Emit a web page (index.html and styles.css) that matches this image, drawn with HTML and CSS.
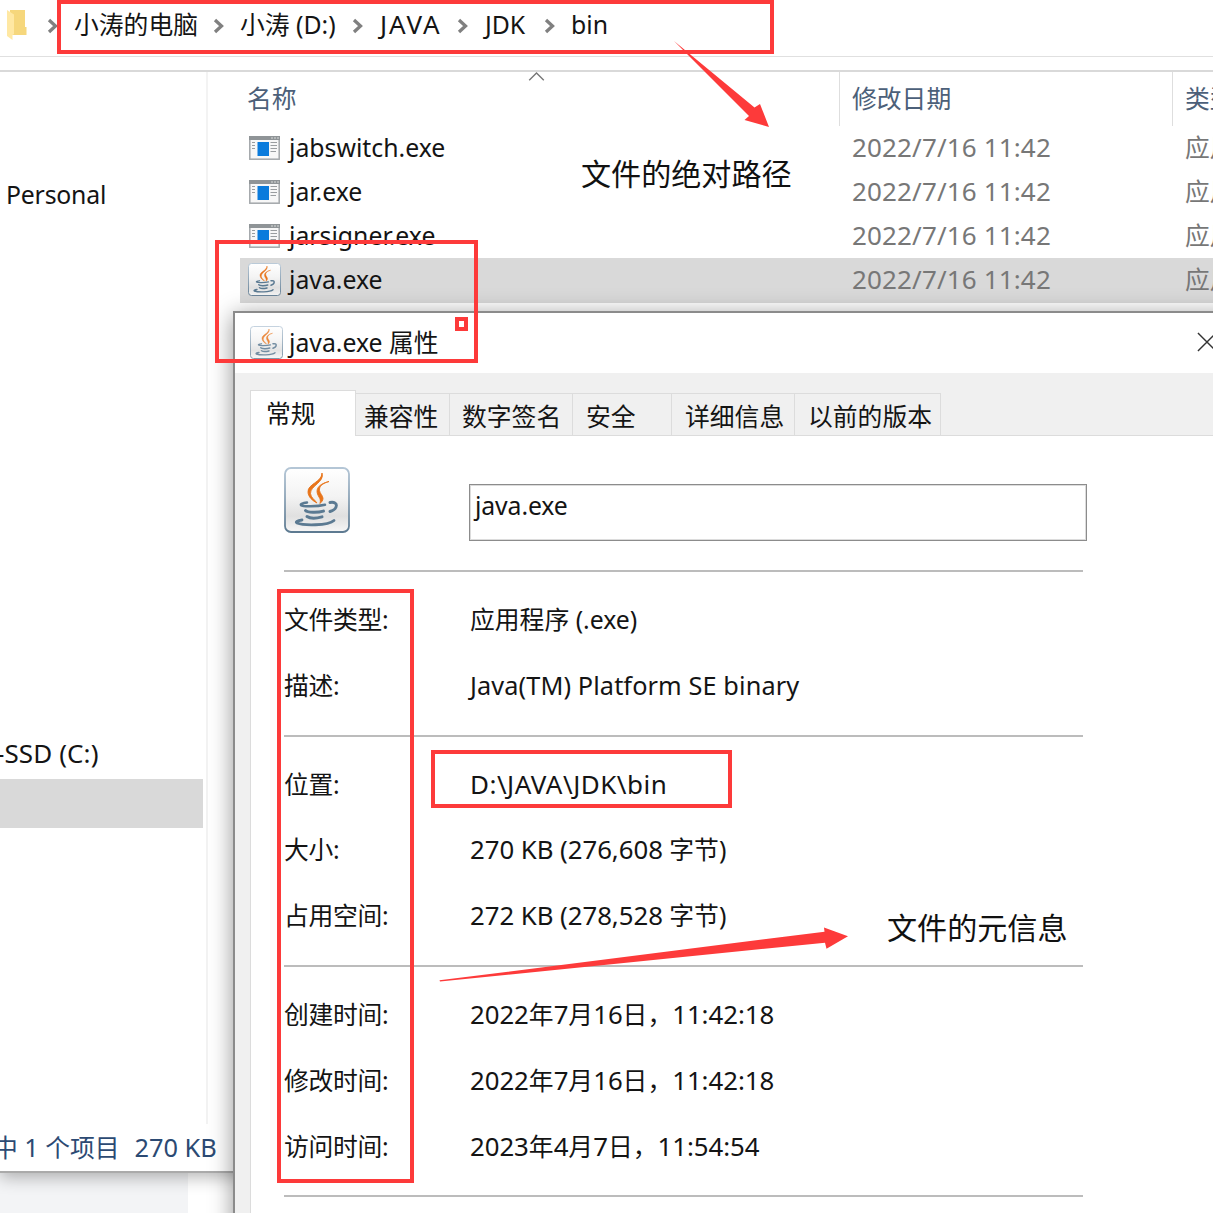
FILE: index.html
```html
<!DOCTYPE html>
<html lang="zh-CN">
<head>
<meta charset="utf-8">
<title>java.exe 属性</title>
<link rel="stylesheet" href="styles.css">
</head>
<body>
<svg class="defs" width="0" height="0" aria-hidden="true">
  <defs>
    <linearGradient id="tile" x1="0" y1="0" x2="0" y2="1">
      <stop offset="0" stop-color="#ffffff"/>
      <stop offset=".45" stop-color="#f3f3f3"/>
      <stop offset=".75" stop-color="#e0e0e0"/>
      <stop offset="1" stop-color="#f6f6f6"/>
    </linearGradient>
    <linearGradient id="rim" x1="0" y1="0" x2="0" y2="1">
      <stop offset="0" stop-color="#b4c6d6"/>
      <stop offset="1" stop-color="#5d7a91"/>
    </linearGradient>
    <symbol id="java" viewBox="0 0 66 66">
      <rect x="1" y="1" width="64" height="64" rx="6" fill="url(#tile)" stroke="url(#rim)" stroke-width="1.8"/>
      <g fill="#e8741a" stroke="#e8741a" stroke-width=".9">
        <path d="M38 6c3 9-12 13-11.500 20.500 .3 4 4 6 6.500 9.500-4-2-9-6-9-11C23.500 17 38 15 38 6z"/>
        <path d="M45 14.500c-7 2-10 5-9.500 9 .3 3 3.500 5 3.500 8 0 2-1.500 3.500-3 5 .7-3 .3-4.500-1-6.500-5-8 0-13 10-15.500z"/>
      </g>
      <g fill="none" stroke="#5b7a92" stroke-linecap="round">
        <path stroke-width="2.500" d="M23 35.500c-4 .7-7 1.500-6 2.700 2 1.600 16 1.500 24-.5"/>
        <path stroke-width="2.900" d="M46 35.500c9-1.500 8 6.500 0 9"/>
        <path stroke-width="3" d="M21.500 43.500c2 2.200 12 2.400 18 .6"/>
        <path stroke-width="3" d="M23 49.500c3 2 9 2 15 .4"/>
        <path stroke-width="2.800" d="M18 53c-5 .7-7 2-5 3 6 2.500 31 3 37-2.500"/>
      </g>
    </symbol>
    <symbol id="exe" viewBox="0 0 31 24">
      <rect x=".8" y=".8" width="29.400" height="22.400" fill="#f7f7f7" stroke="#a3a7aa" stroke-width="1.500"/>
      <path fill="#8f9497" d="M0 0h31v4H0z"/>
      <path stroke="#d7d9da" stroke-width="1.200" d="M22 2h2m1 0h2m1 0h2"/>
      <path fill="#0a7bdc" d="M8.500 6h11.500v14H8.500z"/>
      <path stroke="#999da0" stroke-width="1.200" d="M3 6.500h3M3 9.500h3M3 12.500h3M21.500 6.500H28M21.500 9.500H28M21.500 12.500H28M21.500 15.500H27"/>
    </symbol>
    <symbol id="chev" viewBox="0 0 12 16">
      <path fill="none" stroke="#808080" stroke-width="3.300" d="M2 2l6.500 6L2 14"/>
    </symbol>
  </defs>
</svg>

<main class="desktop">
  <section class="explorer">
    <header class="address">
      <svg class="folder" viewBox="0 0 20 30"><path fill="#f6d77c" d="M3 0h15v17h1.500v8H3z"/><path fill="#ffe8a3" d="M0 0l7 4.500V24l-1.500 1v5L0 26z"/></svg>
      <nav class="crumbs">
        <svg class="chev"><use href="#chev"/></svg><span>小涛的电脑</span>
        <svg class="chev"><use href="#chev"/></svg><span>小涛 (D:)</span>
        <svg class="chev"><use href="#chev"/></svg><span class="java-crumb">JAVA</span>
        <svg class="chev"><use href="#chev"/></svg><span class="jdk-crumb">JDK</span>
        <svg class="chev"><use href="#chev"/></svg><span>bin</span>
      </nav>
    </header>
    <div class="body">
      <aside class="sidebar">
        <div class="side-item">Personal</div>
        <div class="side-item drive">-SSD (C:)</div>
        <div class="side-item selected"></div>
      </aside>
      <div class="files">
        <div class="row head"><span class="name">名称<svg class="sort" viewBox="0 0 16 9"><path fill="none" stroke="#777" stroke-width="1.400" d="M.7 8.300L8 1l7.300 7.300"/></svg></span><span class="date">修改日期</span><span class="type">类型</span></div>
        <div class="row"><span class="name"><svg class="ico"><use href="#exe"/></svg>jabswitch.exe</span><span class="date">2022/7/16 11:42</span><span class="type">应用</span></div>
        <div class="row"><span class="name"><svg class="ico"><use href="#exe"/></svg>jar.exe</span><span class="date">2022/7/16 11:42</span><span class="type">应用</span></div>
        <div class="row"><span class="name"><svg class="ico"><use href="#exe"/></svg>jarsigner.exe</span><span class="date">2022/7/16 11:42</span><span class="type">应用</span></div>
        <div class="row active"><span class="name"><svg class="jico"><use href="#java"/></svg>java.exe</span><span class="date">2022/7/16 11:42</span><span class="type">应用</span></div>
      </div>
    </div>
    <footer class="status"><span>中 <b class="num">1</b> 个项目</span><span class="num">270 KB</span></footer>
  </section>
  <div class="below"></div>

  <section class="dialog">
    <header class="title"><svg class="jico"><use href="#java"/></svg><span>java.exe 属性</span>
      <svg class="close" viewBox="0 0 21 21"><path stroke="#333" stroke-width="1.500" d="M1 1l19 19M20 1L1 20"/></svg></header>
    <div class="tabs">
      <span class="tab current">常规</span><span class="tab t2">兼容性</span><span class="tab t3">数字签名</span><span class="tab t4">安全</span><span class="tab t5">详细信息</span><span class="tab t6">以前的版本</span><span class="rest"></span>
    </div>
    <div class="page">
      <div class="top"><svg class="big"><use href="#java"/></svg><div class="field">java.exe</div></div>
      <dl class="group">
        <dt>文件类型:</dt><dd>应用程序 (.exe)</dd>
        <dt>描述:</dt><dd class="desc">Java(TM) Platform SE binary</dd>
      </dl>
      <dl class="group">
        <dt>位置:</dt><dd class="path">D:\JAVA\JDK\bin</dd>
        <dt>大小:</dt><dd><b class="num">270 KB (276,608</b> 字节)</dd>
        <dt>占用空间:</dt><dd><b class="num">272 KB (278,528</b> 字节)</dd>
      </dl>
      <dl class="group">
        <dt>创建时间:</dt><dd><b class="num">2022</b>年<b class="num">7</b>月<b class="num">16</b>日，<b class="num">11:42:18</b></dd>
        <dt>修改时间:</dt><dd><b class="num">2022</b>年<b class="num">7</b>月<b class="num">16</b>日，<b class="num">11:42:18</b></dd>
        <dt>访问时间:</dt><dd><b class="num">2023</b>年<b class="num">4</b>月<b class="num">7</b>日，<b class="num">11:54:54</b></dd>
      </dl>
      <div class="group"></div>
    </div>
  </section>

  <div class="mark m-crumbs"></div>
  <div class="mark m-file"></div>
  <div class="mark m-dot"></div>
  <div class="mark m-labels"></div>
  <div class="mark m-path"></div>
  <svg class="arrows" viewBox="0 0 1213 1213"><path fill="#fd3a3a" d="M674 41L754.500 107.500 760 104 769 127 744.500 120 749 116zM439.500 980.300L824.500 931.700 824 927.500 848 936.300 826.500 948.700 825 942.700 440 981.500z"/></svg>
  <div class="note n-path">文件的绝对路径</div>
  <div class="note n-meta">文件的元信息</div>
</main>
</body>
</html>
```
FILE: styles.css
```css
* { box-sizing: border-box; }
body {
  margin: 0;
  width: 1213px;
  height: 1213px;
  overflow: hidden;
  background: #fff;
  color: #141414;
  font: 24.8px/44px "Noto Sans", "Noto Sans CJK SC", sans-serif;
  white-space: nowrap;
}
.defs { position: absolute; }
.desktop { position: relative; width: 1213px; height: 1213px; overflow: hidden; }
.num { font-weight: 400; font-size: 25.8px; letter-spacing: -.05px; }

.explorer {
  position: relative;
  display: flex;
  flex-direction: column;
  height: 1173px;
  background: #fff;
  border-bottom: 2px solid #aaa;
  box-shadow: 0 4px 16px rgba(0, 0, 0, .3);
}
.address { display: flex; height: 57px; border-bottom: 1px solid #e0e0e0; padding-left: 7px; }
.folder { width: 20px; height: 30px; margin-top: 10px; }
.crumbs {
  display: grid;
  grid-template-columns: 27px 139px 27px 112px 28px 77px 28px 59px 27px 60px;
  align-items: center;
  height: 48px;
  padding-left: 20px;
}
.chev { width: 12px; height: 16px; margin-top: 4px; }
.java-crumb { font-size: 26px; letter-spacing: 1.9px; }

.body { display: flex; height: 1054px; margin-top: 13px; border-top: 2px solid #d9d9d9; }
.sidebar { flex: none; width: 208px; border-right: 2px solid #f3f3f3; padding-top: 100px; }
.side-item { height: 44px; padding-left: 6px; letter-spacing: -.2px; }
.drive { margin-top: 515px; padding-left: 0; margin-left: -4px; font-size: 26px; letter-spacing: .1px; }
.selected { height: 49px; width: 203px; margin-top: 4px; background: #d9d9d9; }
.files { flex: none; width: 1005px; padding-left: 32px; overflow: hidden; }
.row { display: flex; height: 44px; line-height: 42px; }
.row span { flex: none; }
.name { display: flex; align-items: center; height: 42px; width: 599px; padding-left: 9px; }
.date { width: 333px; padding-left: 13px; color: #777; font-size: 26px; letter-spacing: .15px; }
.type { width: 80px; padding-left: 13px; color: #777; }
.head { position: relative; height: 54px; line-height: 52px; }
.head span { color: #4c6079; }
.head .name { height: 52px; padding-left: 7px; }
.head .date { font-size: 24.8px; letter-spacing: 0; }
.head .date, .head .type { border-left: 1px solid #dedede; padding-left: 12px; }
.sort { position: absolute; left: 288px; top: 0; width: 17px; height: 9px; }
.ico { width: 31px; height: 24px; margin-right: 9px; margin-top: 2px; }
.jico { width: 33px; height: 33px; flex: none; margin-right: 8px; margin-left: -1px; }
.active { width: 1005px; height: 45px; background: #d9d9d9; }
.status { display: flex; gap: 15px; height: 46px; line-height: 46px; margin-left: -7px; color: #2c4a73; }
.status .num { font-size: 25.4px; }
.below { width: 188px; height: 40px; background: #f3f4f6; }

.dialog {
  position: absolute;
  left: 233px;
  top: 311px;
  width: 1100px;
  height: 1000px;
  border: 2px solid #8b8b8b;
  background: #f0f0f0;
  box-shadow: 0 4px 22px rgba(0, 0, 0, .42);
}
.title { display: flex; align-items: center; height: 60px; line-height: 42px; background: #fff; padding: 0 0 3px 15px; }
.title .jico { margin: 2px 6px 0 0; opacity: .85; }
.close { width: 20px; height: 20px; margin-left: 758px; }
.tabs { display: flex; align-items: flex-end; height: 63px; padding-left: 15px; }
.tab { height: 43px; line-height: 44px; border: solid #dcdcdc; border-width: 1px 1px 1px 0; padding-left: 9px; }
.current { width: 106px; height: 46px; border-width: 1px 1px 0; background: #fff; padding-left: 15px; }
.t2 { width: 94px; padding-left: 8px; }
.t3 { width: 123px; padding-left: 12px; }
.t4 { width: 99px; padding-left: 13px; }
.t5 { width: 123px; padding-left: 13px; }
.t6 { width: 146px; padding-left: 13px; }
.rest { flex: 1; border-bottom: 1px solid #dcdcdc; }
.page { margin-left: 15px; height: 800px; padding-left: 33px; background: #fff; border-left: 1px solid #dcdcdc; }
.top { display: flex; height: 134px; padding-top: 31px; }
.big { width: 66px; height: 66px; margin-right: 119px; }
.field { width: 618px; height: 57px; margin-top: 17px; border: 1px solid #8c8c8c; box-shadow: inset 0 0 0 1px #dcdcdc; padding-left: 5px; line-height: 41px; letter-spacing: -.1px; }
.group {
  display: grid;
  grid-template-columns: 186px 613px;
  grid-auto-rows: 65.8px;
  width: 799px;
  margin: 0;
  padding: 15px 0 16px;
  border-top: 2px solid #bcbcbc;
  line-height: 64px;
}
dt { letter-spacing: -.3px; }
dd { margin: 0; }
.desc { font-size: 25.3px; letter-spacing: .1px; }
.path { font-size: 26px; letter-spacing: .5px; }

.mark { position: absolute; border: 4px solid #fd3a3a; }
.m-crumbs { left: 57px; top: 0; width: 717px; height: 54px; }
.m-file { left: 215px; top: 240px; width: 263px; height: 123px; }
.m-dot { left: 455px; top: 317px; width: 13px; height: 14px; }
.m-labels { left: 277px; top: 589px; width: 137px; height: 594px; }
.m-path { left: 431px; top: 750px; width: 301px; height: 58px; }
.arrows { position: absolute; left: 0; top: 0; width: 1213px; height: 1213px; }
.note { position: absolute; font-size: 30.100px; line-height: 40px; color: #111; }
.n-path { left: 581px; top: 154px; }
.n-meta { left: 887px; top: 908px; }
```
